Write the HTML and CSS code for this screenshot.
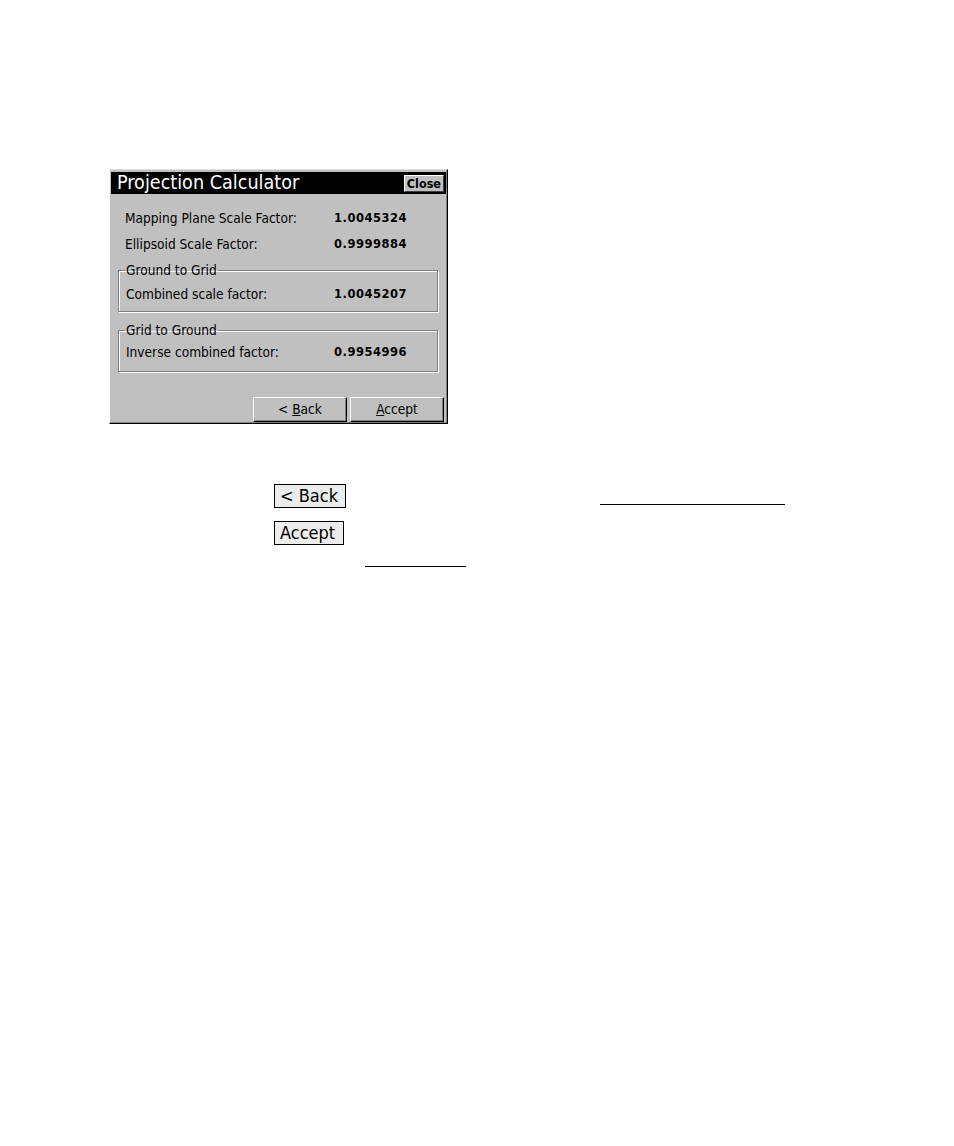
FILE: index.html
```html
<!DOCTYPE html>
<html>
<head>
<meta charset="utf-8">
<link rel="stylesheet" href="styles.css">
</head>
<body>
<div class="page">
  <div class="dialog">
    <div class="titlebar">
      <span class="title">Projection Calculator</span>
      <span class="close">Close</span>
    </div>
    <div class="body">
      <div class="row top1"><span class="label">Mapping Plane Scale Factor:</span><span class="value">1.0045324</span></div>
      <div class="row top2"><span class="label">Ellipsoid Scale Factor:</span><span class="value">0.9999884</span></div>
      <fieldset class="group g1">
        <legend>Ground to Grid</legend>
        <div class="row"><span class="label">Combined scale factor:</span><span class="value">1.0045207</span></div>
      </fieldset>
      <fieldset class="group g2">
        <legend>Grid to Ground</legend>
        <div class="row"><span class="label">Inverse combined factor:</span><span class="value">0.9954996</span></div>
      </fieldset>
      <div class="buttons">
        <span class="btn">&lt; <u>B</u>ack</span>
        <span class="btn"><u>A</u>ccept</span>
      </div>
    </div>
  </div>
  <div class="doc">
    <div class="docrow r1">
      <span class="inbtn w1">&lt; Back</span>
      <span class="rule l1"></span>
    </div>
    <div class="docrow r2">
      <span class="inbtn w2">Accept</span>
    </div>
    <div class="docrow r3">
      <span class="rule l2"></span>
    </div>
  </div>
</div>
</body>
</html>
```

FILE: styles.css
```css
html, body {
  margin: 0;
  padding: 0;
  background: #ffffff;
}
.page {
  padding-top: 169px;
  padding-left: 109px;
  font-family: "DejaVu Sans Condensed", "DejaVu Sans", sans-serif;
}
.dialog {
  width: 337px;
  height: 253px;
  background: #c0c0c0;
  border-top: 1px solid #dfdfdf;
  border-left: 1px solid #ffffff;
  border-right: 1px solid #000000;
  border-bottom: 1px solid #000000;
  box-shadow: inset -1px -1px 0 #808080;
  display: flex;
  flex-direction: column;
}
.titlebar {
  margin: 2px 1px 0 1px;
  height: 22px;
  background: #000000;
  display: flex;
  align-items: center;
  justify-content: space-between;
  padding-left: 6px;
  padding-right: 2px;
}
.title {
  color: #ffffff;
  font-size: 19.6px;
  line-height: 22px;
}
.close {
  background: #c0c0c0;
  color: #000;
  font-weight: bold;
  font-size: 12.5px;
  line-height: 15px;
  height: 15px;
  padding: 0 2px;
  border-top: 1px solid #fff;
  border-left: 1px solid #fff;
  border-right: 1px solid #404040;
  border-bottom: 1px solid #404040;
}
.body {
  flex: 1;
  display: flex;
  flex-direction: column;
  padding: 0 3px 1px 8px;
  font-size: 13.6px;
  color: #000;
}
.row {
  display: flex;
  height: 16px;
  line-height: 16px;
  align-items: center;
}
.label {
  width: 209px;
  padding-left: 7px;
  flex: none;
}
.group .label {
  padding-left: 7px;
  width: 208px;
}
.value {
  font-weight: bold;
  font-size: 12.8px;
  letter-spacing: 0.5px;
}
.top1 {
  margin-top: 16px;
}
.top2 {
  margin-top: 10px;
}
.group {
  margin: 0;
  padding: 0;
  width: 320px;
  border: 1px solid #808080;
  box-shadow: 1px 1px 0 #ffffff, inset 1px 1px 0 #ffffff;
  box-sizing: border-box;
}
.group legend {
  font-size: 13.6px;
  padding: 0 1px;
  margin-left: 6px;
  line-height: 14px;
}
.g1 {
  margin-top: 11px;
  height: 49px;
}
.g2 {
  margin-top: 11px;
  height: 49px;
}
.g1 .row {
  margin-top: 9px;
}
.g2 .row {
  margin-top: 7px;
}
.buttons {
  margin-top: auto;
  display: flex;
  justify-content: flex-end;
  gap: 3px;
}
.btn {
  width: 92px;
  height: 23px;
  line-height: 23px;
  text-align: center;
  font-size: 13.6px;
  background: #c0c0c0;
  border-top: 1px solid #ffffff;
  border-left: 1px solid #ffffff;
  border-right: 1px solid #000000;
  border-bottom: 1px solid #000000;
  box-shadow: inset -1px -1px 0 #808080;
}
.doc {
  padding-top: 60px;
  font-family: "DejaVu Sans Condensed", "DejaVu Sans", sans-serif;
}
.docrow {
  display: flex;
  align-items: flex-end;
}
.inbtn {
  display: inline-block;
  background: #ececec;
  border: 1.5px solid #000;
  font-size: 18px;
  line-height: 22px;
  padding: 0 5px;
  color: #000;
  box-sizing: border-box;
}
.w1 {
  margin-left: 165px;
  width: 72px;
  height: 24px;
}
.w2 {
  margin-left: 165px;
  width: 70px;
  height: 24px;
}
.r1 {
  height: 24px;
}
.r2 {
  margin-top: 13px;
  height: 24px;
}
.r3 {
  height: 22px;
}
.rule {
  display: block;
  border-bottom: 1px solid #000;
}
.l1 {
  margin-left: 254px;
  width: 185px;
  margin-bottom: 3px;
}
.l2 {
  margin-left: 256px;
  width: 101px;
}
```
